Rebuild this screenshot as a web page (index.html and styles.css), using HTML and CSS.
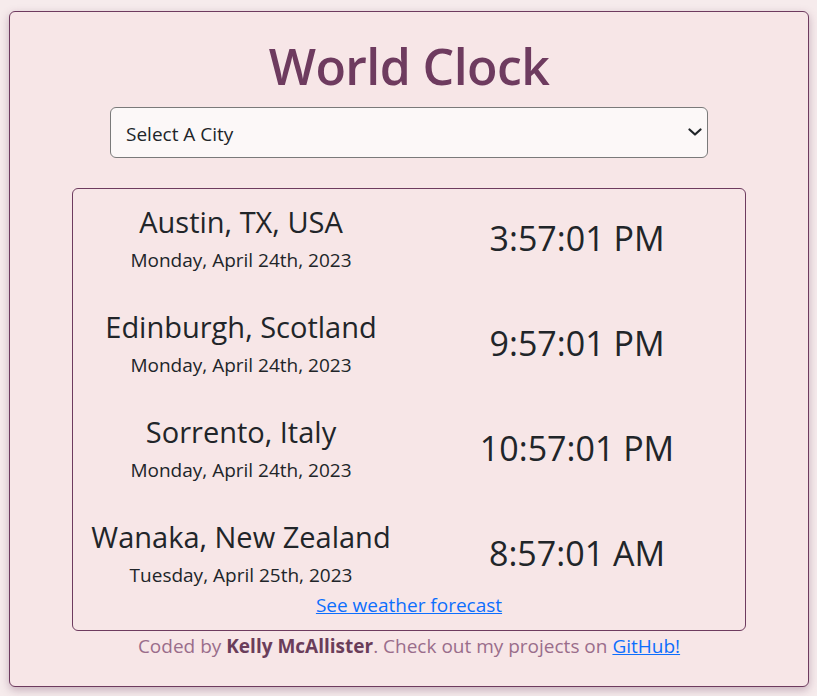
FILE: index.html
```html
<!DOCTYPE html>
<html lang="en">
<head>
<meta charset="utf-8">
<title>World Clock</title>
<link rel="stylesheet" href="styles.css">
</head>
<body>
<div class="card">
  <h1 class="title">World Clock</h1>
  <div class="select-wrap">
    <select class="city-select">
      <option>Select A City</option>
    </select>
    <svg class="chevron" width="14" height="10" viewBox="0 0 14 10"><path d="M1.5 2.5 L7 7.5 L12.5 2.5" fill="none" stroke="#212529" stroke-width="2.2" stroke-linecap="round" stroke-linejoin="round"/></svg>
  </div>
  <div class="clocks">
    <div class="rows">
      <div class="row">
        <div class="place"><div class="city">Austin, TX, USA</div><div class="date">Monday, April 24th, 2023</div></div>
        <div class="time">3:57:01 PM</div>
      </div>
      <div class="row">
        <div class="place"><div class="city">Edinburgh, Scotland</div><div class="date">Monday, April 24th, 2023</div></div>
        <div class="time">9:57:01 PM</div>
      </div>
      <div class="row">
        <div class="place"><div class="city">Sorrento, Italy</div><div class="date">Monday, April 24th, 2023</div></div>
        <div class="time">10:57:01 PM</div>
      </div>
      <div class="row">
        <div class="place"><div class="city">Wanaka, New Zealand</div><div class="date">Tuesday, April 25th, 2023</div></div>
        <div class="time">8:57:01 AM</div>
      </div>
    </div>
    <div class="forecast"><a href="#">See weather forecast</a></div>
  </div>
  <p class="footer">Coded by <strong>Kelly McAllister</strong>. Check out my projects on <a href="#">GitHub!</a></p>
</div>
</body>
</html>
```

FILE: styles.css
```css
html, body {
  margin: 0;
  padding: 0;
}
body {
  background: #f6ebec;
  font-family: "Open Sans", "Noto Sans", sans-serif;
  color: #212529;
  padding: 11px 8px 10px 9px;
}
.card {
  background: #f7e6e7;
  border: 1px solid #6e3b5f;
  border-radius: 6px;
  box-shadow: 0 3px 8px rgba(110, 59, 95, 0.35);
  padding: 21px 62px 26px;
}
.title {
  margin: 0;
  text-align: center;
  font-size: 50px;
  line-height: 67px;
  letter-spacing: -0.6px;
  font-weight: 600;
  color: #6e3b5f;
}
.select-wrap {
  position: relative;
  margin: 7px 38px 30px;
}
.city-select {
  appearance: none;
  -webkit-appearance: none;
  display: block;
  width: 100%;
  height: 51px;
  box-sizing: border-box;
  border: 1px solid #7a7a7a;
  border-radius: 6px;
  background: #fcf8f8;
  font-family: inherit;
  font-size: 19px;
  color: #212529;
  padding: 2px 40px 0 15px;
}
.chevron {
  position: absolute;
  right: 6px;
  top: 20px;
  pointer-events: none;
}
.clocks {
  border: 1px solid #6e3b5f;
  border-radius: 6px;
  padding: 0 0 11px;
}
.rows {
  display: flex;
  flex-direction: column;
  gap: 20px;
}
.row {
  display: grid;
  grid-template-columns: 1fr 1fr;
  align-items: center;
  padding-top: 15px;
}
.place {
  text-align: center;
}
.city {
  font-size: 29px;
  line-height: 36px;
}
.date {
  font-size: 19px;
  line-height: 28px;
  margin-top: 6px;
}
.time {
  text-align: center;
  font-size: 34px;
  line-height: 44px;
  padding-bottom: 2px;
}
.forecast {
  text-align: center;
  font-size: 19px;
  line-height: 28px;
  margin-top: 2px;
}
.forecast a, .footer a {
  color: #0d6efd;
}
.footer {
  margin: 1px 0 0;
  text-align: center;
  font-size: 19px;
  line-height: 28px;
  color: #9a6d8b;
}
.footer strong {
  color: #6a3d5a;
  font-weight: 700;
}
```
